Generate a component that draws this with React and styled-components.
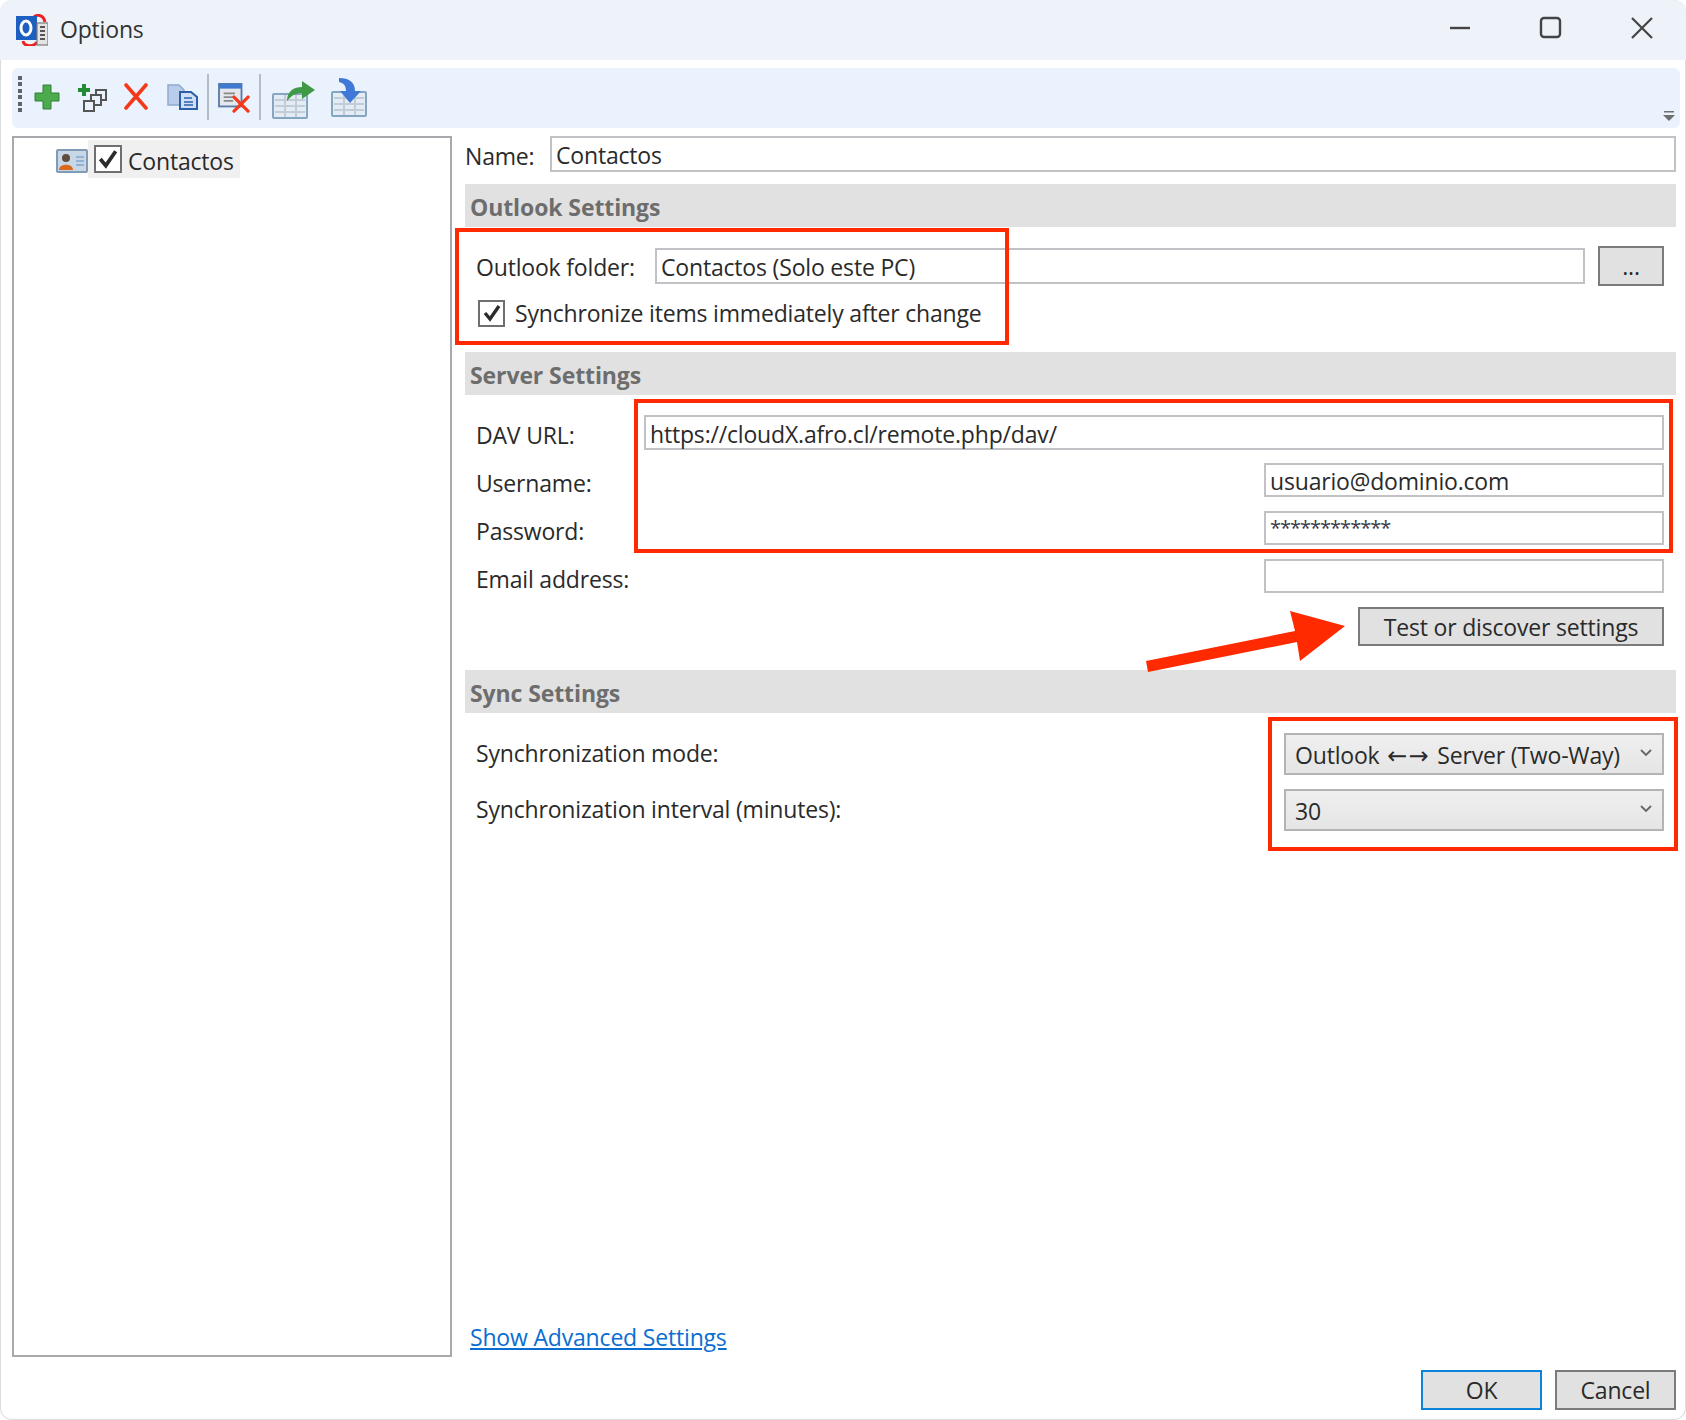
import React from "react";
import styled, { createGlobalStyle } from "styled-components";

const GlobalStyle = createGlobalStyle`
  html, body {
    margin: 0;
    padding: 0;
    background: #ffffff;
  }
  * {
    box-sizing: border-box;
  }
`

const Window = styled.div`
  position: relative;
  width: 1686px;
  height: 1420px;
  display: flex;
  flex-direction: column;
  background: #ffffff;
  border-radius: 12px;
  box-shadow: inset 0 0 0 1px #dcdcdc;
  overflow: hidden;
  font-family: "Open Sans", "Noto Sans", sans-serif;
  font-size: 23px;
  letter-spacing: -0.18px;
  color: #2a2a2a;
`

///////////////////////////////Title bar
const TitleBar = styled.div`
  height: 60px;
  flex: none;
  display: flex;
  align-items: center;
  padding-left: 16px;
  background: #eef3fa;
`
const TitleText = styled.div`
  margin-left: 12px;
  padding-bottom: 2px;
  font-size: 23px;
  color: #333333;
`
const WindowButtons = styled.div`
  margin-left: auto;
  display: flex;
  align-items: center;
`
const WindowButton = styled.svg`
  width: 24px;
  height: 24px;
  margin-left: ${(p) => p.$left}px;
  margin-right: ${(p) => p.$right || 0}px;
  margin-top: -4px;
`

///////////////////////////////Toolbar
const Toolbar = styled.div`
  height: 60px;
  flex: none;
  margin: 8px 6px 8px 12px;
  padding-left: 6px;
  display: flex;
  align-items: flex-start;
  background: #eaf3fd;
  border-radius: 6px;
`
const Grip = styled.div`
  width: 4px;
  height: 36px;
  margin-top: 8px;
  background: repeating-linear-gradient(#5f6468 0 4px, transparent 4px 6.4px);
`
const ToolIcon = styled.svg`
  flex: none;
  width: ${(p) => p.$w}px;
  height: ${(p) => p.$h}px;
  margin-left: ${(p) => p.$left}px;
  margin-top: ${(p) => p.$top}px;
`
const ToolSeparator = styled.div`
  flex: none;
  width: 2px;
  height: 46px;
  margin-left: ${(p) => p.$left}px;
  margin-top: 6px;
  background: #b4bcc5;
`
const Overflow = styled.svg`
  flex: none;
  width: 12px;
  height: 12px;
  margin-left: auto;
  margin-right: 5px;
  margin-top: 42px;
`

///////////////////////////////Main area
const Main = styled.div`
  flex: 1;
  min-height: 0;
  display: flex;
  padding: 0 10px 0 12px;
`
const Tree = styled.div`
  width: 440px;
  flex: none;
  border: 2px solid #a9a9ad;
  padding: 2px 0 0 40px;
`
const TreeItem = styled.div`
  display: flex;
  align-items: center;
  width: 186px;
  height: 38px;
`
const TreeIcon = styled.svg`
  width: 32px;
  height: 24px;
  flex: none;
  margin-left: 2px;
  margin-top: 4px;
`
const TreeLabel = styled.div`
  flex: 1;
  height: 38px;
  display: flex;
  align-items: center;
  padding-left: 6px;
  background: #f0f0f0;
`
const TreeText = styled.span`
  margin-left: 6px;
  margin-top: 3px;
`
const CheckBox = styled.div`
  width: ${(p) => p.$size}px;
  height: ${(p) => p.$size}px;
  flex: none;
  display: flex;
  align-items: center;
  justify-content: center;
  background: #ffffff;
  border: 2px solid #6f6f6f;
`
const Settings = styled.div`
  flex: 1;
  min-width: 0;
  margin-left: 13px;
  display: flex;
  flex-direction: column;
`
const Row = styled.div`
  flex: none;
  height: ${(p) => p.$h}px;
  margin-top: ${(p) => p.$top || 0}px;
  padding-left: ${(p) => p.$inset ?? 11}px;
  padding-right: ${(p) => p.$inset ?? 12}px;
  display: flex;
  align-items: center;
  justify-content: space-between;
`
const Label = styled.div`
  white-space: nowrap;
  padding-top: ${(p) => p.$drop || 0}px;
  padding-bottom: ${(p) => p.$lift || 0}px;
`
const Field = styled.div`
  flex: none;
  width: ${(p) => p.$width}px;
  height: ${(p) => p.$h || 34}px;
  margin-left: auto;
  padding: 2px 0 0 4px;
  display: flex;
  align-items: center;
  background: #ffffff;
  border: 2px solid #c2c2c6;
  white-space: nowrap;
`
const Masked = styled.span`
  font-size: 20px;
  letter-spacing: -1px;
  margin-top: -4px;
  color: #3a3a4a;
`
const Section = styled.div`
  flex: none;
  height: 43px;
  margin-top: ${(p) => p.$top}px;
  padding: 2px 0 0 5px;
  display: flex;
  align-items: center;
  background: #e1e1e1;
  font-weight: 700;
  letter-spacing: -0.1px;
  color: #6d6d6d;
`
const CheckLabel = styled.label`
  display: flex;
  align-items: center;
  gap: 10px;
  margin-left: 2px;
`
const Button = styled.div`
  flex: none;
  width: ${(p) => p.$width}px;
  height: ${(p) => p.$h}px;
  margin-left: ${(p) => p.$left || 0}px;
  display: flex;
  align-items: center;
  justify-content: center;
  background: #e1e1e1;
  border: 2px solid ${(p) => (p.$primary ? "#0a84d8" : "#7b7b7b")};
  color: #2a2a2a;
`
const Select = styled.div`
  flex: none;
  width: 380px;
  height: 42px;
  padding: 0 10px 0 9px;
  display: flex;
  align-items: center;
  justify-content: space-between;
  background: linear-gradient(#efefef, #e5e5e5);
  border: 2px solid #b4b4b4;
`
const SelectValue = styled.span`
  padding-top: 1px;
  white-space: nowrap;
`
const Arrows = styled.span`
  font-family: "DejaVu Sans", sans-serif;
  font-size: 24px;
  letter-spacing: 1px;
  margin: 0 2px;
`
const Chevron = styled.svg`
  width: 12px;
  height: 8px;
  margin-top: -3px;
`
const AdvancedLink = styled.a`
  flex: none;
  height: 40px;
  margin-top: auto;
  margin-left: 5px;
  display: flex;
  align-items: center;
  align-self: flex-start;
  color: #0a6ed1;
  text-decoration: underline;
`
const Footer = styled.div`
  flex: none;
  height: 63px;
  padding: 13px 10px 0 0;
  display: flex;
  justify-content: flex-end;
`

///////////////////////////////Annotations on top of the screenshot
const RedBox = styled.div`
  position: absolute;
  left: ${(p) => p.$x}px;
  top: ${(p) => p.$y}px;
  width: ${(p) => p.$w}px;
  height: ${(p) => p.$h}px;
  border: 4px solid #ff2a00;
  pointer-events: none;
`
const Arrow = styled.svg`
  position: absolute;
  left: 1140px;
  top: 605px;
  width: 210px;
  height: 72px;
`

const AppIcon = () => (
  <svg width="32" height="32" viewBox="0 0 32 32" style={{ flex: "none" }}>
    <path d="M17 6 C17 0 27 -1 29 8" fill="none" stroke="#ee2222" strokeWidth="3" />
    <path d="M7 27 C8 33 18 33 21 28" fill="none" stroke="#ee2222" strokeWidth="3" />
    <rect x="0" y="2" width="21" height="24" fill="#1c5fc0" />
    <ellipse cx="10" cy="14" rx="5" ry="7" fill="none" stroke="#ffffff" strokeWidth="3" />
    <rect x="21" y="9" width="11" height="22" fill="#e4e4e4" stroke="#7a7a7a" strokeWidth="1.2" />
    <path d="M24 13h5M24 17h5M24 21h5M24 25h5" stroke="#555555" strokeWidth="2" />
  </svg>
)

const CheckMark = ({ size }) => (
  <svg width={size} height={size} viewBox="0 0 20 20">
    <path d="M3 10 L8 16 L17 3" fill="none" stroke="#2b2b2b" strokeWidth="3.4" />
  </svg>
)

const Table = () => (
  <>
    <rect x="1" y="15" width="34" height="24" rx="1" fill="#e3ecf4" stroke="#86a5c0" strokeWidth="2" />
    <path d="M3 21h30M3 27h30M3 33h30M13 16v22M24 16v22" stroke="#c2ccd6" strokeWidth="2" />
  </>
)

export default function App() {
  return (
    <Window>
      <GlobalStyle />
      <TitleBar>
        <AppIcon />
        <TitleText>Options</TitleText>
        <WindowButtons>
          <WindowButton $left={0} viewBox="0 0 24 24">
            <path d="M2 12h20" stroke="#444444" strokeWidth="2.4" />
          </WindowButton>
          <WindowButton $left={66} viewBox="0 0 24 24">
            <rect x="3" y="2" width="19" height="19" rx="3" fill="none" stroke="#444444" strokeWidth="2.4" />
          </WindowButton>
          <WindowButton $left={68} $right={32} viewBox="0 0 24 24">
            <path d="M2 2 L22 22 M22 2 L2 22" stroke="#444444" strokeWidth="2.2" />
          </WindowButton>
        </WindowButtons>
      </TitleBar>

      <Toolbar>
        <Grip />
        {/* add */}
        <ToolIcon $w={26} $h={26} $left={12} $top={16} viewBox="0 0 26 26">
          <path d="M9 1h8v8h8v8h-8v8H9v-8H1V9h8z" fill="#4cab4c" stroke="#2f7f34" strokeWidth="1" />
        </ToolIcon>
        {/* add multiple */}
        <ToolIcon $w={30} $h={28} $left={18} $top={16} viewBox="0 0 30 28">
          <path d="M4 0h4v4h4v4H8v4H4V8H0V4h4z" fill="#238a36" />
          <rect x="18" y="6" width="10" height="10" fill="none" stroke="#555555" strokeWidth="2" />
          <rect x="13" y="11" width="10" height="10" fill="#eaf3fd" stroke="#555555" strokeWidth="2" />
          <rect x="6" y="17" width="10" height="10" fill="#eaf3fd" stroke="#555555" strokeWidth="2" />
        </ToolIcon>
        {/* remove */}
        <ToolIcon $w={26} $h={27} $left={15} $top={15} viewBox="0 0 26 27">
          <path d="M3 2 L23 25 M23 2 L3 25" stroke="#f2391c" strokeWidth="3.6" strokeLinecap="round" />
        </ToolIcon>
        {/* copy */}
        <ToolIcon $w={31} $h={26} $left={18} $top={16} viewBox="0 0 31 26">
          <path d="M1 1h11l5 5v15H1z" fill="#b9cdea" stroke="#8ea9cf" strokeWidth="1.5" />
          <path d="M13 8h11l6 5v12H13z" fill="#cfe0f4" stroke="#2f5ea8" strokeWidth="2" />
          <path d="M17 14h8M17 18h9M17 21h9" stroke="#2f5ea8" strokeWidth="1.6" />
        </ToolIcon>
        <ToolSeparator $left={9} />
        {/* delete cache */}
        <ToolIcon $w={32} $h={30} $left={9} $top={15} viewBox="0 0 34 32">
          <rect x="1" y="1" width="24" height="24" fill="#e4e8ed" stroke="#5a7da8" strokeWidth="2" />
          <rect x="1" y="1" width="24" height="5" fill="#3f7ad0" />
          <path d="M6 11h12M6 15h12M6 19h10" stroke="#888888" strokeWidth="2" />
          <path d="M17 15 L32 30 M32 15 L17 30" stroke="#f2391c" strokeWidth="3.4" strokeLinecap="round" />
        </ToolIcon>
        <ToolSeparator $left={9} />
        {/* export */}
        <ToolIcon $w={44} $h={40} $left={11} $top={11} viewBox="0 0 44 40">
          <Table />
          <path d="M15 22 C15 12 22 8 30 8 V2 L43 11 L30 20 V14 C24 14 20 16 15 22z" fill="#3f9a46" />
        </ToolIcon>
        {/* import */}
        <ToolIcon $w={36} $h={42} $left={15} $top={9} viewBox="0 0 36 42">
          <Table />
          <path d="M8 1 C18 1 24 5 24 14 H30 L19 26 L9 14 H15 C15 9 13 6 8 5z" fill="#3f78d6" />
        </ToolIcon>
        <Overflow viewBox="0 0 12 12">
          <path d="M1 1h10v1.6H1z" fill="#6f6f6f" />
          <path d="M0 5h12L6 11z" fill="#6f6f6f" />
        </Overflow>
      </Toolbar>

      <Main>
        <Tree>
          <TreeItem>
            <TreeIcon viewBox="0 0 32 24">
              <rect x="1" y="1" width="30" height="22" rx="1" fill="#c8d6e6" stroke="#7f9bb5" strokeWidth="2" />
              <circle cx="10" cy="9" r="4" fill="#5e4c3e" />
              <path d="M3 21 C3 14 17 14 17 21z" fill="#d9691f" />
              <path d="M20 8h8M20 12h8M20 16h8" stroke="#8fb2d6" strokeWidth="2" />
            </TreeIcon>
            <TreeLabel>
              <CheckBox $size={28}>
                <CheckMark size={22} />
              </CheckBox>
              <TreeText>Contactos</TreeText>
            </TreeLabel>
          </TreeItem>
        </Tree>

        <Settings>
          <Row $h={36} $inset={0}>
            <Label $drop={4}>Name:</Label>
            <Field $h={36} $width={1126}>Contactos</Field>
          </Row>

          <Section $top={12}>Outlook Settings</Section>
          <Row $h={40} $top={19}>
            <Label $drop={2}>Outlook folder:</Label>
            <Field $h={36} $width={930}>Contactos (Solo este PC)</Field>
            <Button $width={66} $h={40} $left={13}>...</Button>
          </Row>
          <Row $h={26} $top={14}>
            <CheckLabel>
              <CheckBox $size={27}>
                <CheckMark size={20} />
              </CheckBox>
              Synchronize items immediately after change
            </CheckLabel>
          </Row>

          <Section $top={26}>Server Settings</Section>
          <Row $h={35} $top={20}>
            <Label $drop={4}>DAV URL:</Label>
            <Field $h={35} $width={1020}>https://cloudX.afro.cl/remote.php/dav/</Field>
          </Row>
          <Row $h={34} $top={13}>
            <Label $drop={6}>Username:</Label>
            <Field $width={400}>usuario@dominio.com</Field>
          </Row>
          <Row $h={34} $top={14}>
            <Label $drop={6}>Password:</Label>
            <Field $width={400}>
              <Masked>************</Masked>
            </Field>
          </Row>
          <Row $h={34} $top={14}>
            <Label $drop={6}>Email address:</Label>
            <Field $width={400} />
          </Row>
          <Row $h={39} $top={14}>
            <span />
            <Button $width={306} $h={39}>Test or discover settings</Button>
          </Row>

          <Section $top={24}>Sync Settings</Section>
          <Row $h={42} $top={20}>
            <Label $lift={2}>Synchronization mode:</Label>
            <Select>
              <SelectValue>Outlook <Arrows>←→</Arrows> Server (Two-Way)</SelectValue>
              <Chevron viewBox="0 0 12 8">
                <path d="M1 1 L6 6 L11 1" fill="none" stroke="#666666" strokeWidth="1.8" />
              </Chevron>
            </Select>
          </Row>
          <Row $h={42} $top={14}>
            <Label $lift={2}>Synchronization interval (minutes):</Label>
            <Select>
              <SelectValue>30</SelectValue>
              <Chevron viewBox="0 0 12 8">
                <path d="M1 1 L6 6 L11 1" fill="none" stroke="#666666" strokeWidth="1.8" />
              </Chevron>
            </Select>
          </Row>

          <AdvancedLink href="#">Show Advanced Settings</AdvancedLink>
        </Settings>
      </Main>

      <Footer>
        <Button $width={121} $h={40} $primary>OK</Button>
        <Button $width={121} $h={40} $left={13}>Cancel</Button>
      </Footer>

      {/* red marks drawn over the dialog */}
      <RedBox $x={455} $y={228} $w={554} $h={117} />
      <RedBox $x={634} $y={399} $w={1039} $h={154} />
      <RedBox $x={1268} $y={717} $w={410} $h={134} />
      <Arrow viewBox="1140 605 210 72">
        <path d="M1146 661 L1295 631 L1290 611 L1345 626 L1300 661 L1297 642 L1148 672z" fill="#ff2a00" />
      </Arrow>
    </Window>
  );
}
